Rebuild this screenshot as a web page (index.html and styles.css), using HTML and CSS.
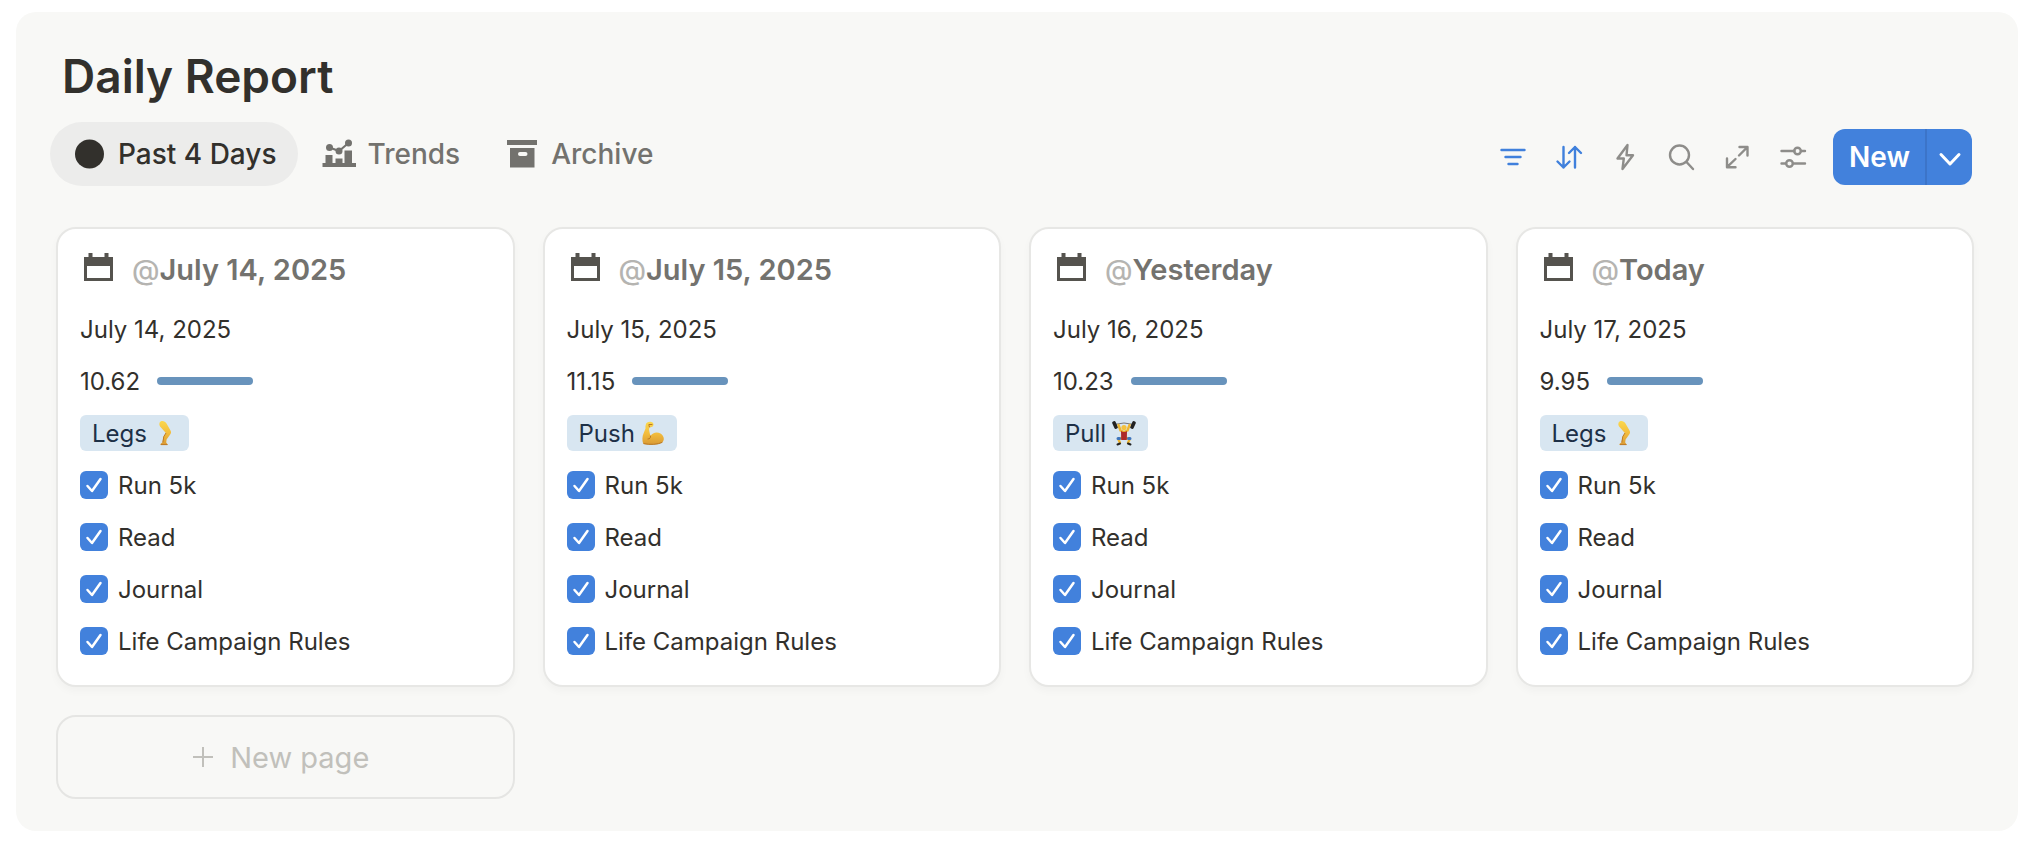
FILE: index.html
```html
<!DOCTYPE html>
<html lang="en">
<head>
<meta charset="utf-8">
<title>Daily Report</title>
<link rel="stylesheet" href="styles.css">
</head>
<body>
<svg class="sprite" aria-hidden="true">
  <symbol id="calendar" viewBox="0 0 29 28">
    <path fill="currentColor" fill-rule="evenodd" d="M0 4H4.500V0H8.500V4H20.500V0H24.500V4H29V28H0ZM3 13V25H26V13Z"/>
  </symbol>
  <symbol id="leg" viewBox="0 0 24 26">
    <defs>
      <linearGradient id="skin" x1="0" y1="0" x2="0" y2="1"><stop offset="0" stop-color="#fbd84f"/><stop offset="0.500" stop-color="#f3bd3d"/><stop offset="1" stop-color="#d99a35"/></linearGradient>
    </defs>
    <path fill="url(#skin)" d="M6.500 3C7.500 0 12 .5 13.500 3.500L17.500 10.500C18.500 12.300 18 13.500 17 14.800L13.600 19.500L13.200 22.500L14.500 24.200V25H7.500C7 24 8 23.200 9.500 22.500L10.300 17.500C10.600 15.500 12.300 14.600 13 13.200L8 7.500C6.500 6 6 4.500 6.500 3Z"/>
    <path fill="none" stroke="#bd7a27" stroke-width="1" d="M13 13L10.800 16.500L9.800 22.500M8 24.600H14.500"/>
  </symbol>
  <symbol id="biceps" viewBox="0 0 24 26">
    <path fill="url(#skin)" d="M5 4C5 2.500 7.500 1.500 9.500 1.700C12 1.900 13 3.500 12.300 5.500C11.800 7 9.800 7.500 8.500 7L8 9.500C8.500 12.500 9 14.500 9.500 16C11.500 12.500 16 11.500 19.500 13.500C23.500 16 23.800 20.500 21 22.500C16.500 25.500 7 25 2.200 23.700C1 21 1.200 16 2.500 13.500L4.500 8.500C4.200 7 4.500 5.500 5 4Z"/>
    <path fill="none" stroke="#b97823" stroke-width="1" stroke-linecap="round" d="M8 4.500H11M8.500 7L8 5.500M9.500 16C10 18 8.500 19 7 19M3 23.700C9 24.900 17 24.600 21 22.500"/>
  </symbol>
  <symbol id="lifter" viewBox="0 0 24 26">
    <path stroke="#777" stroke-width="1" d="M2 4.500Q12 1.500 22 4.500" fill="none"/>
    <rect x="1.200" y="1" width="3.600" height="8" rx="1.500" fill="#222" transform="rotate(-24 3 5)"/>
    <rect x="19.200" y="1" width="3.600" height="8" rx="1.500" fill="#222" transform="rotate(24 21 5)"/>
    <path fill="none" stroke="#eeb52f" stroke-width="2.400" stroke-linecap="round" stroke-linejoin="round" d="M6.500 5L8.500 10.500L12 12L15.500 10.500L17.500 5M9 18L6.500 19.500L8 23M15 18L17.500 19.500L16 23"/>
    <circle cx="12" cy="7.500" r="2.600" fill="#f4c13d"/>
    <path fill="#ad2a2a" d="M9 11Q12 13 15 11L14.800 20H9.200Z"/>
    <path fill="none" stroke="#3e75bd" stroke-width="3" stroke-linecap="round" d="M6 18.500H7.500M16.500 18.500H18"/>
    <path fill="none" stroke="#222" stroke-width="2" stroke-linecap="round" d="M5.500 24.500L8 23.500M16 23.500L18.500 24.500"/>
  </symbol>
</svg>
<main class="panel">
  <h1 class="title">Daily Report</h1>
  <header class="bar">
    <nav class="tabs">
      <button class="tab tab-active"><svg class="tab-icon" viewBox="0 0 30 30"><circle cx="15.500" cy="15" r="14.500" fill="currentColor"/></svg>Past 4 Days</button>
      <button class="tab"><svg class="tab-icon" viewBox="0 0 30 30"><g fill="currentColor"><path d="M-1.500 24H1.500V16H8.500V24H11.500V19.500H18.500V24H20.500V11.500H28V24H32V28H-1.500Z"/><circle cx="5.500" cy="8.500" r="3.500"/><circle cx="15" cy="12" r="3.500"/><circle cx="24.500" cy="4" r="3.500"/></g><path d="M5.500 8.500L15 12L24.500 4" fill="none" stroke="currentColor" stroke-width="2"/></svg>Trends</button>
      <button class="tab"><svg class="tab-icon" viewBox="0 0 30 30"><path fill="currentColor" fill-rule="evenodd" d="M0 1H30V6H0ZM3 9H27.500V28.500H3ZM13 13A2 2 0 0 0 13 17H18.500A2 2 0 0 0 18.500 13Z"/></svg>Archive</button>
    </nav>
    <div class="tools">
      <button class="tool tool-on" aria-label="Filter"><svg class="tool-icon" viewBox="0 0 28 28"><path d="M2.500 7H25.500M6.500 14H21.500M9.500 21H18.500"/></svg></button>
      <button class="tool tool-on" aria-label="Sort"><svg class="tool-icon" viewBox="0 0 28 28"><path d="M8.500 4V24.500M2.500 18.500L8.500 24.500L14.500 18.500M20 24.500V4M14 10L20 4L26 10"/></svg></button>
      <button class="tool" aria-label="Automations"><svg class="tool-icon" viewBox="0 0 28 28"><path d="M16.500 2L6.500 15.500H12.800L11.500 26L22 12.300H15.500Z"/></svg></button>
      <button class="tool" aria-label="Search"><svg class="tool-icon" viewBox="0 0 28 28"><circle cx="12.500" cy="12" r="9.500"/><path d="M19.500 19L26 26"/></svg></button>
      <button class="tool" aria-label="Expand"><svg class="tool-icon" viewBox="0 0 28 28"><path d="M16 12.500L24.500 4M16.500 4H24.500V12.500M12.500 16L4 24.200M4 15.500V24.200H12.500"/></svg></button>
      <button class="tool" aria-label="View settings"><svg class="tool-icon" viewBox="0 0 28 28"><path d="M2.500 8H15.500M22 8H26M2.500 20.500H7M14 20.500H26"/><circle cx="18.500" cy="8" r="3.300"/><circle cx="10.500" cy="20.500" r="3.300"/></svg></button>
      <div class="new">
        <button class="new-main">New</button>
        <button class="new-more" aria-label="New from template"><svg class="chevron" viewBox="0 0 28 28"><path d="M5 11.500L14 21L23 11.500"/></svg></button>
      </div>
    </div>
  </header>
  <section class="board">
    <article class="card">
      <h2 class="card-title"><svg class="card-icon"><use href="#calendar"/></svg><span><span class="at">@</span>July 14, 2025</span></h2>
      <div class="row">July 14, 2025</div>
      <div class="row">10.62<span class="meter"></span></div>
      <div class="row"><span class="tag">Legs <svg class="emoji" role="img" aria-label="leg"><use href="#leg"/></svg></span></div>
      <label class="row check"><input class="box" type="checkbox" checked>Run 5k</label>
      <label class="row check"><input class="box" type="checkbox" checked>Read</label>
      <label class="row check"><input class="box" type="checkbox" checked>Journal</label>
      <label class="row check"><input class="box" type="checkbox" checked>Life Campaign Rules</label>
    </article>
    <article class="card">
      <h2 class="card-title"><svg class="card-icon"><use href="#calendar"/></svg><span><span class="at">@</span>July 15, 2025</span></h2>
      <div class="row">July 15, 2025</div>
      <div class="row">11.15<span class="meter"></span></div>
      <div class="row"><span class="tag">Push <svg class="emoji" role="img" aria-label="flexed biceps"><use href="#biceps"/></svg></span></div>
      <label class="row check"><input class="box" type="checkbox" checked>Run 5k</label>
      <label class="row check"><input class="box" type="checkbox" checked>Read</label>
      <label class="row check"><input class="box" type="checkbox" checked>Journal</label>
      <label class="row check"><input class="box" type="checkbox" checked>Life Campaign Rules</label>
    </article>
    <article class="card">
      <h2 class="card-title"><svg class="card-icon"><use href="#calendar"/></svg><span><span class="at">@</span>Yesterday</span></h2>
      <div class="row">July 16, 2025</div>
      <div class="row">10.23<span class="meter"></span></div>
      <div class="row"><span class="tag">Pull <svg class="emoji" role="img" aria-label="weight lifter"><use href="#lifter"/></svg></span></div>
      <label class="row check"><input class="box" type="checkbox" checked>Run 5k</label>
      <label class="row check"><input class="box" type="checkbox" checked>Read</label>
      <label class="row check"><input class="box" type="checkbox" checked>Journal</label>
      <label class="row check"><input class="box" type="checkbox" checked>Life Campaign Rules</label>
    </article>
    <article class="card">
      <h2 class="card-title"><svg class="card-icon"><use href="#calendar"/></svg><span><span class="at">@</span>Today</span></h2>
      <div class="row">July 17, 2025</div>
      <div class="row">9.95<span class="meter"></span></div>
      <div class="row"><span class="tag">Legs <svg class="emoji" role="img" aria-label="leg"><use href="#leg"/></svg></span></div>
      <label class="row check"><input class="box" type="checkbox" checked>Run 5k</label>
      <label class="row check"><input class="box" type="checkbox" checked>Read</label>
      <label class="row check"><input class="box" type="checkbox" checked>Journal</label>
      <label class="row check"><input class="box" type="checkbox" checked>Life Campaign Rules</label>
    </article>
    <button class="new-page"><svg class="plus" viewBox="0 0 20 20"><path d="M10 0V20M0 10H20"/></svg>New page</button>
  </section>
</main>
</body>
</html>
```
FILE: styles.css
```css
* { box-sizing: border-box; }
body {
  margin: 0;
  padding: 12px 14px 11px 16px;
  background: #fff;
  color: #32302c;
  font-family: Inter, "Liberation Sans", sans-serif;
  font-size: 24px;
}
button {
  margin: 0;
  padding: 0;
  border: 0;
  background: none;
  color: inherit;
  font: inherit;
  cursor: pointer;
}
.sprite { position: absolute; width: 0; height: 0; }
.panel {
  padding: 36px 44px 32px 34px;
  border-radius: 20px;
  background: #f8f8f6;
}
.title {
  margin: 0 0 18px;
  padding-left: 12px;
  font-size: 46px;
  font-weight: 600;
  line-height: 56px;
}
.bar {
  display: flex;
  justify-content: space-between;
  align-items: flex-end;
  padding-right: 2px;
}
.tabs { display: flex; gap: 2px; }
.tab {
  display: flex;
  align-items: center;
  gap: 14px;
  height: 64px;
  padding: 0 21px 0 24px;
  border-radius: 32px;
  color: #73726e;
  font-size: 28px;
  font-weight: 500;
}
.tab-active { background: #ececeb; color: #32302c; }
.tab-icon { width: 30px; height: 30px; overflow: visible; }
.tools { display: flex; align-items: center; margin-bottom: 1px; }
.tool {
  display: grid;
  place-items: center;
  width: 56px;
  height: 56px;
  color: #8e8d8a;
}
.tool-on { color: #4080dc; }
.tool-icon, .chevron {
  width: 28px;
  height: 28px;
  fill: none;
  stroke: currentColor;
  stroke-width: 2.4;
  stroke-linecap: round;
  stroke-linejoin: round;
}
.new {
  display: flex;
  height: 56px;
  margin-left: 12px;
  border-radius: 12px;
  overflow: hidden;
  background: #4281dc;
  color: #fff;
}
.new-main { padding: 0 15px 0 16px; font-size: 28px; font-weight: 600; }
.new-more {
  display: grid;
  place-items: center;
  width: 47px;
  border-left: 2px solid #3c74c8;
}
.chevron { stroke-width: 3; }
.board {
  display: grid;
  grid-template-columns: repeat(4, 1fr);
  gap: 28px;
  margin: 41px 0 0 6px;
}
.card {
  padding: 22px 22px 18px;
  border: 2px solid #e7e7e5;
  border-radius: 20px;
  background: #fff;
  box-shadow: 0 4px 8px rgba(0, 0, 0, 0.03);
}
.card-title {
  display: flex;
  align-items: center;
  gap: 19px;
  margin: 0 0 14px;
  padding-left: 4px;
  color: #73726e;
  font-size: 29px;
  font-weight: 600;
  line-height: 38px;
}
.card-icon { width: 29px; height: 28px; margin-bottom: 6px; color: #55534e; }
.at { color: #b5b4b1; font-size: 28px; font-weight: 500; }
.row { display: flex; align-items: center; height: 52px; }
.meter {
  width: 96px;
  height: 8px;
  margin-left: 17px;
  border-radius: 4px;
  background: #6893bc;
}
.tag {
  display: flex;
  align-items: center;
  gap: 6px;
  height: 36px;
  padding: 0 12px;
  border-radius: 6px;
  background: #d8e6f1;
  color: #1d3047;
}
.emoji { width: 24px; height: 26px; }
.check { gap: 10px; }
.box {
  appearance: none;
  width: 28px;
  height: 28px;
  margin: 0;
  border-radius: 6px;
}
.box:checked {
  background: #4281dc url("data:image/svg+xml,%3Csvg xmlns='http://www.w3.org/2000/svg' viewBox='0 0 28 28'%3E%3Cpath d='M7.500 15L12 20L20.500 8' fill='none' stroke='white' stroke-width='2.500' stroke-linecap='round' stroke-linejoin='round'/%3E%3C/svg%3E") center / 28px 28px no-repeat;
}
.new-page {
  display: flex;
  align-items: center;
  justify-content: center;
  gap: 17px;
  height: 84px;
  padding-right: 8px;
  border: 2px solid #e5e5e3;
  border-radius: 20px;
  color: #c1c0bb;
  font-size: 29px;
}
.plus { width: 20px; height: 20px; fill: none; stroke: currentColor; stroke-width: 2; }
```
